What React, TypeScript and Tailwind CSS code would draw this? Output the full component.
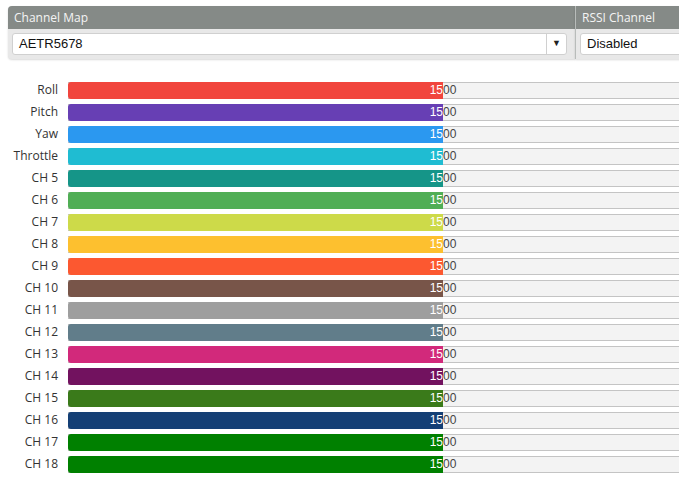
const channels: { name: string; color: string }[] = [
  { name: 'Roll', color: '#f1453d' },
  { name: 'Pitch', color: '#673fb4' },
  { name: 'Yaw', color: '#2b98f0' },
  { name: 'Throttle', color: '#1fbcd2' },
  { name: 'CH 5', color: '#159588' },
  { name: 'CH 6', color: '#50ae55' },
  { name: 'CH 7', color: '#cdda49' },
  { name: 'CH 8', color: '#fdc02f' },
  { name: 'CH 9', color: '#fc5830' },
  { name: 'CH 10', color: '#785549' },
  { name: 'CH 11', color: '#9e9e9e' },
  { name: 'CH 12', color: '#617d8a' },
  { name: 'CH 13', color: '#d2297b' },
  { name: 'CH 14', color: '#72125f' },
  { name: 'CH 15', color: '#3a7a1a' },
  { name: 'CH 16', color: '#143f75' },
  { name: 'CH 17', color: '#008000' },
  { name: 'CH 18', color: '#008000' },
];

function Select({ value, arrow }: { value: string; arrow?: boolean }) {
  return (
    <div className="flex h-[22px] items-center rounded-[3px] border border-[#d0d0d0] bg-white font-['Liberation_Sans',sans-serif] text-[13px] text-[#111]">
      <span className="flex-1 whitespace-nowrap pl-[6px]">{value}</span>
      {arrow && (
        <span className="flex h-full w-[20px] items-center justify-center border-l border-[#d0d0d0] text-[9px] text-[#222]">
          ▼
        </span>
      )}
    </div>
  );
}

function Bar({ name, color }: { name: string; color: string }) {
  return (
    <div className="flex h-[22px] items-center">
      <div className="w-[58px] shrink-0 whitespace-nowrap text-right font-['Open_Sans',sans-serif] text-[12px] text-[#333]">
        {name}
      </div>
      <div className="relative ml-[10px] h-[17px] w-[750px] shrink-0 border-y border-[#c4c4c4] bg-[#f3f3f3]">
        <div className="absolute inset-0 flex items-center justify-center font-['Liberation_Sans',sans-serif] text-[12px] text-[#444]">
          1500
        </div>
        <div
          className="absolute -top-px -bottom-px left-0 w-1/2 overflow-hidden rounded-l-[3px]"
          style={{ backgroundColor: color }}
        >
          <div className="flex h-full w-[750px] items-center justify-center font-['Liberation_Sans',sans-serif] text-[12px] text-white">
            1500
          </div>
        </div>
      </div>
    </div>
  );
}

export default function App() {
  return (
    <div className="h-[478px] w-full overflow-hidden bg-white">
      <div className="flex pl-[8px] pt-[6px]">
        <div className="w-[567px] shrink-0 overflow-hidden rounded-l-[4px] bg-[#e8e8e8] shadow-[0_1px_2px_rgba(0,0,0,0.15)]">
          <div className="flex h-[23px] items-center bg-[#858a87] pl-[6px] font-['Open_Sans',sans-serif] text-[12px] text-[#f4f4f4]">
            Channel Map
          </div>
          <div className="pb-[4px] pl-[4px] pr-[8px] pt-[4px]">
            <Select value="AETR5678" arrow />
          </div>
        </div>
        <div className="w-[200px] shrink-0 overflow-hidden border-l border-[#b8bcba] bg-[#e8e8e8] shadow-[0_1px_2px_rgba(0,0,0,0.15)]">
          <div className="flex h-[23px] items-center bg-[#858a87] pl-[6px] font-['Open_Sans',sans-serif] text-[12px] text-[#f4f4f4]">
            RSSI Channel
          </div>
          <div className="px-[4px] pb-[4px] pt-[4px]">
            <Select value="Disabled" />
          </div>
        </div>
      </div>
      <div className="mt-[20px] flex flex-col">
        {channels.map((c) => (
          <Bar key={c.name} name={c.name} color={c.color} />
        ))}
      </div>
    </div>
  );
}
